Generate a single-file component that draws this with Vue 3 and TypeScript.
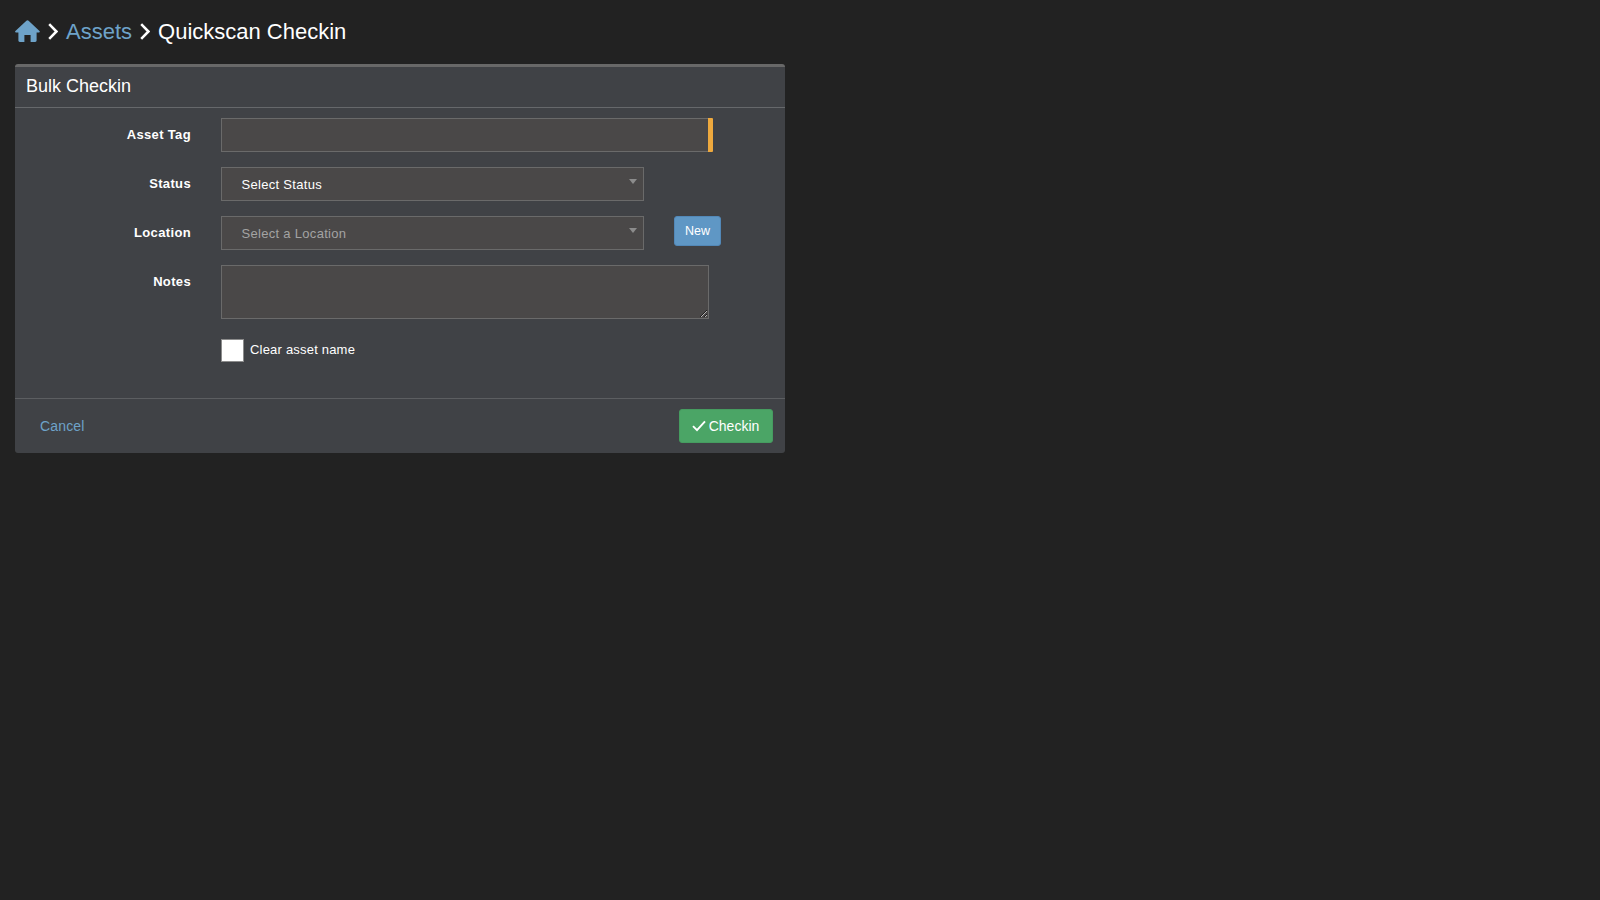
<script setup lang="ts">
const homePath =
  'M12.5.2c.4 0 .8.2 1.1.5l10.9 10.3c.6.6.2 1.5-.6 1.5h-2.3v8c0 .8-.6 1.4-1.4 1.4h-4.6v-7h-6.2v7H4.8c-.8 0-1.4-.6-1.4-1.4v-8H1c-.8 0-1.2-.9-.6-1.5L11.4.7c.3-.3.7-.5 1.1-.5z'
</script>

<template>
  <div class="page">
    <nav class="crumbs">
      <svg class="home" viewBox="0 0 25 22"><path :d="homePath" /></svg>
      <svg class="chev" viewBox="0 0 10 17"><path d="M1.2 1.2 8.4 8.5l-7.2 7.3" /></svg>
      <a class="link crumb-text">Assets</a>
      <svg class="chev" viewBox="0 0 10 17"><path d="M1.2 1.2 8.4 8.5l-7.2 7.3" /></svg>
      <span class="crumb-text">Quickscan Checkin</span>
    </nav>

    <section class="panel">
      <header class="head">Bulk Checkin</header>
      <div class="body">
        <div class="row">
          <label class="lab">Asset Tag</label>
          <div class="required"><input class="field" type="text" /></div>
        </div>
        <div class="row">
          <label class="lab">Status</label>
          <div class="select">
            <span>Select Status</span>
            <i class="caret"></i>
          </div>
        </div>
        <div class="row">
          <label class="lab">Location</label>
          <div class="select muted">
            <span>Select a Location</span>
            <i class="caret"></i>
          </div>
          <button class="new" type="button">New</button>
        </div>
        <div class="row">
          <label class="lab">Notes</label>
          <textarea class="notes"></textarea>
        </div>
        <div class="row check">
          <span class="box"></span>
          <span class="check-text">Clear asset name</span>
        </div>
      </div>
      <footer class="foot">
        <a class="cancel">Cancel</a>
        <button class="submit" type="button">
          <svg viewBox="0 0 14 12"><path d="M1 6.2 5 10.2 13 1.4" /></svg>
          Checkin
        </button>
      </footer>
    </section>
  </div>
</template>

<style>
html,
body {
  margin: 0;
  background: #222222;
}
</style>

<style scoped>
.page {
  min-height: 900px;
  box-sizing: border-box;
  padding: 15px;
  background: #222222;
  color: #fff;
  font-family: "Liberation Sans", Arial, sans-serif;
}
.crumbs {
  display: flex;
  align-items: center;
  height: 32px;
  font-size: 22px;
  gap: 8px;
}
.crumb-text {
  padding-top: 2px;
}
.home {
  width: 25px;
  height: 22px;
  fill: #6ea3c9;
}
.chev {
  width: 10px;
  height: 17px;
  fill: none;
  stroke: #fff;
  stroke-width: 2.5;
}
.link {
  color: #6ea3c9;
}
.panel {
  width: 770px;
  height: 389px;
  box-sizing: border-box;
  margin-top: 17px;
  display: flex;
  flex-direction: column;
  background: #404246;
  border-top: 3px solid #686868;
  border-radius: 3px;
}
.head {
  height: 41px;
  box-sizing: border-box;
  padding: 0 11px 2px;
  display: flex;
  align-items: center;
  font-size: 18px;
  border-bottom: 1px solid #66686b;
}
.body {
  flex: 1;
  padding: 10px 0 0;
  display: flex;
  flex-direction: column;
  gap: 15px;
}
.row {
  display: grid;
  grid-template-columns: 176px auto auto;
  column-gap: 30px;
  justify-content: start;
  align-items: start;
}
.lab {
  text-align: right;
  font-size: 13px;
  font-weight: 700;
  letter-spacing: 0.35px;
  line-height: 18px;
  padding-top: 8px;
}
.required {
  border-right: 5px solid #eea93e;
  border-radius: 1px;
  display: flex;
}
.field {
  width: 487px;
  height: 34px;
  box-sizing: border-box;
  background: #4a4848;
  border: 1px solid #6a6a6a;
  border-right: 0;
  outline: none;
  display: block;
}
.select {
  width: 423px;
  height: 34px;
  box-sizing: border-box;
  background: #4a4848;
  border: 1px solid #6a6a6a;
  padding: 0 19.5px;
  display: flex;
  align-items: center;
  position: relative;
  font-size: 13px;
  letter-spacing: 0.3px;
  color: #fff;
}
.select.muted {
  color: #a3a3a3;
}
.caret {
  position: absolute;
  right: 6px;
  top: 11px;
  border-left: 4px solid transparent;
  border-right: 4px solid transparent;
  border-top: 5px solid #8c8c8c;
}
.new {
  width: 47px;
  height: 30px;
  box-sizing: border-box;
  background: #5f97c5;
  border: 1px solid #5288b8;
  border-radius: 3px;
  color: #fff;
  font-family: inherit;
  font-size: 12.5px;
  padding: 0;
  margin-left: 0;
}
.notes {
  display: block;
  width: 488px;
  height: 54px;
  box-sizing: border-box;
  background: #4a4848;
  border: 1px solid #6a6a6a;
  outline: none;
  margin: 0;
  resize: vertical;
  grid-column: 2 / 4;
}
.check {
  margin-top: 5px;
  grid-template-columns: 23px auto;
  column-gap: 6px;
  padding-left: 206px;
}
.box {
  width: 23px;
  height: 23px;
  box-sizing: border-box;
  background: #fff;
  border: 1px solid #8c8c8c;
}
.check-text {
  font-size: 13px;
  letter-spacing: 0.2px;
  line-height: 22px;
}
.foot {
  height: 55px;
  box-sizing: border-box;
  border-top: 1px solid #5c5e61;
  padding: 0 12px 0 25px;
  display: flex;
  align-items: center;
  justify-content: space-between;
}
.cancel {
  color: #6ea3c9;
  font-size: 14px;
  letter-spacing: 0.15px;
}
.submit {
  width: 94px;
  height: 34px;
  box-sizing: border-box;
  background: #4ba566;
  border: 1px solid #469c60;
  border-radius: 3px;
  color: #fff;
  font-family: inherit;
  font-size: 14px;
  padding: 0 1px 0 0;
  display: flex;
  align-items: center;
  justify-content: center;
  gap: 3px;
}
.submit svg {
  width: 14px;
  height: 12px;
  fill: none;
  stroke: #fff;
  stroke-width: 1.9;
}
</style>
